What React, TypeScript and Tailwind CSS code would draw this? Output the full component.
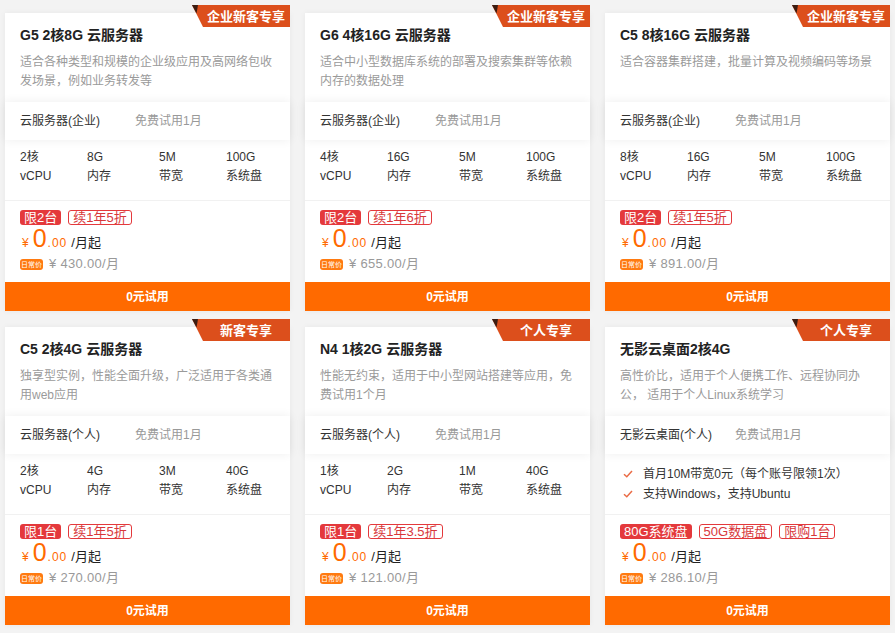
import React from "react";

type Tag = { t: string; f?: boolean };
type Card = {
  badge: string;
  title: string;
  desc: string;
  product: string;
  specs?: [string, string][];
  features?: string[];
  tags: Tag[];
  price: string;
};

const cards: Card[] = [
  {
    badge: "企业新客专享",
    title: "G5 2核8G 云服务器",
    desc: "适合各种类型和规模的企业级应用及高网络包收发场景，例如业务转发等",
    product: "云服务器(企业)",
    specs: [["2核", "vCPU"], ["8G", "内存"], ["5M", "带宽"], ["100G", "系统盘"]],
    tags: [{ t: "限2台", f: true }, { t: "续1年5折" }],
    price: "430.00",
  },
  {
    badge: "企业新客专享",
    title: "G6 4核16G 云服务器",
    desc: "适合中小型数据库系统的部署及搜索集群等依赖内存的数据处理",
    product: "云服务器(企业)",
    specs: [["4核", "vCPU"], ["16G", "内存"], ["5M", "带宽"], ["100G", "系统盘"]],
    tags: [{ t: "限2台", f: true }, { t: "续1年6折" }],
    price: "655.00",
  },
  {
    badge: "企业新客专享",
    title: "C5 8核16G 云服务器",
    desc: "适合容器集群搭建，批量计算及视频编码等场景",
    product: "云服务器(企业)",
    specs: [["8核", "vCPU"], ["16G", "内存"], ["5M", "带宽"], ["100G", "系统盘"]],
    tags: [{ t: "限2台", f: true }, { t: "续1年5折" }],
    price: "891.00",
  },
  {
    badge: "新客专享",
    title: "C5 2核4G 云服务器",
    desc: "独享型实例，性能全面升级，广泛适用于各类通用web应用",
    product: "云服务器(个人)",
    specs: [["2核", "vCPU"], ["4G", "内存"], ["3M", "带宽"], ["40G", "系统盘"]],
    tags: [{ t: "限1台", f: true }, { t: "续1年5折" }],
    price: "270.00",
  },
  {
    badge: "个人专享",
    title: "N4 1核2G 云服务器",
    desc: "性能无约束，适用于中小型网站搭建等应用，免费试用1个月",
    product: "云服务器(个人)",
    specs: [["1核", "vCPU"], ["2G", "内存"], ["1M", "带宽"], ["40G", "系统盘"]],
    tags: [{ t: "限1台", f: true }, { t: "续1年3.5折" }],
    price: "121.00",
  },
  {
    badge: "个人专享",
    title: "无影云桌面2核4G",
    desc: "高性价比，适用于个人便携工作、远程协同办公， 适用于个人Linux系统学习",
    product: "无影云桌面(个人)",
    features: ["首月10M带宽0元（每个账号限领1次）", "支持Windows，支持Ubuntu"],
    tags: [{ t: "80G系统盘", f: true }, { t: "50G数据盘" }, { t: "限购1台" }],
    price: "286.10",
  },
];

function Badge({ text }: { text: string }) {
  return (
    <div className="absolute right-0 top-[-8px] h-[22px] w-[98px] flex items-center justify-center pl-[12px] pr-[2px]">
      <svg className="absolute inset-0" width="98" height="22" viewBox="0 0 98 22">
        <polygon points="0,0 98,0 98,22 11,22" fill="#dc4f1c" />
        <polygon points="0,0 6,0 4.5,8.5" fill="#3b1d12" />
      </svg>
      <span className="relative text-white text-[13px] font-bold leading-none">{text}</span>
    </div>
  );
}

function CardView({ c }: { c: Card }) {
  return (
    <div className="relative bg-white shadow-[0_0_6px_rgba(0,0,0,0.05)]">
      <Badge text={c.badge} />
      <div className="h-[89px] px-[15px] pt-[12px]">
        <div className="text-[14px] leading-[20px] font-bold text-[#222]">{c.title}</div>
        <div className="mt-[8px] text-[12px] leading-[19px] text-[#9a9a9a]">{c.desc}</div>
      </div>
      <div className="relative h-[38px] px-[15px] flex items-center text-[12px] bg-white shadow-[0_0_10px_rgba(0,0,0,0.07)]">
        <span className="w-[115px] text-[#333]">{c.product}</span>
        <span className="text-[#999]">免费试用1月</span>
      </div>
      {c.specs ? (
        <div className="h-[60px] px-[15px] pt-[8px] grid grid-cols-[67px_72px_67px_1fr] text-[12px] leading-[19px] text-[#333]">
          {c.specs.map((s, i) => (
            <div key={i}>
              <div>{s[0]}</div>
              <div>{s[1]}</div>
            </div>
          ))}
        </div>
      ) : (
        <div className="h-[60px] px-[15px] pt-[10px] text-[12px] leading-[20px] text-[#333]">
          {c.features!.map((f, i) => (
            <div key={i} className="flex items-center">
              <svg width="10" height="8" viewBox="0 0 10 8" className="ml-[3px] mr-[10px]">
                <path d="M1 4.2 L3.8 6.8 L9 1" fill="none" stroke="#ea6b45" strokeWidth="1.5" />
              </svg>
              <span>{f}</span>
            </div>
          ))}
        </div>
      )}
      <div className="h-[82px] px-[15px] pt-[9px] border-t border-[#f1f1f1]">
        <div className="flex gap-[7px]">
          {c.tags.map((t, i) => (
            <span
              key={i}
              className={
                t.f
                  ? "h-[15px] px-[4px] rounded-[3px] bg-[#e4393c] text-white text-[13px] leading-[15px]"
                  : "h-[15px] px-[4px] rounded-[3px] border border-[#e4393c] text-[#d8383b] text-[13px] leading-[13px]"
              }
            >
              {t.t}
            </span>
          ))}
        </div>
        <div className="mt-0 h-[26px] flex items-baseline text-[#ff6a00]">
          <span className="ml-[2px] text-[12px]">¥</span>
          <span className="ml-[4px] text-[25px] leading-[26px]">0</span>
          <span className="ml-[1px] text-[12px] tracking-[1px]">.00</span>
          <span className="ml-[4px] text-[13px] text-[#222]">/月起</span>
        </div>
        <div className="mt-[5px] h-[16px] flex items-center">
          <span className="w-[23px] h-[11px] rounded-[3px] bg-[#ff7a10] text-white text-[7px] leading-[11px] text-center">日常价</span>
          <span className="ml-[6px] text-[13px] leading-[16px] text-[#999] tracking-[0.3px]">¥ {c.price}/月</span>
        </div>
      </div>
      <div className="h-[29px] bg-[#ff6a00] flex items-center justify-center text-white text-[12px] font-bold">
        0元试用
      </div>
    </div>
  );
}

export default function App() {
  return (
    <div className="w-[895px] h-[633px] bg-[#f3f3f3] font-['Liberation_Sans','Noto_Sans_CJK_SC',sans-serif] overflow-hidden">
      <div className="grid grid-cols-3 gap-x-[15px] gap-y-[16px] px-[5px] pt-[13px]">
        {cards.map((c, i) => (
          <CardView key={i} c={c} />
        ))}
      </div>
    </div>
  );
}
